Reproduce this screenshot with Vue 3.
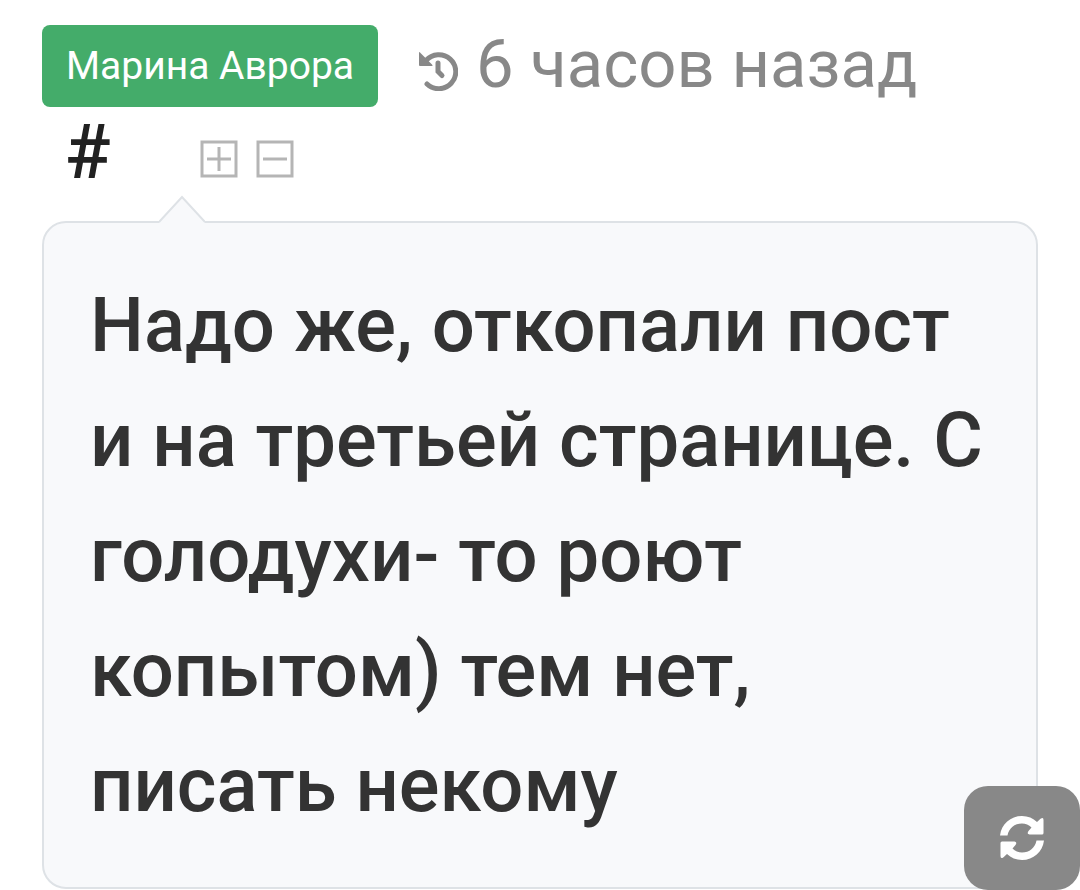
<script setup>
const author = 'Марина Аврора'
const posted = '6 часов назад'
const message = 'Надо же, откопали пост и на третьей странице. С голодухи- то роют копытом) тем нет, писать некому'
</script>

<template>
  <article class="comment">
    <header class="meta">
      <a class="author" href="#author">{{ author }}</a>
      <time class="time">
        <svg class="history" viewBox="0 0 40 40" aria-hidden="true">
          <path d="M8 9.500A17 17 0 1 1 9 33" />
          <path d="M20 12V20.500L24 24.500" />
          <path class="solid" d="M2 1.500Q1 .500 1 2V14Q1 15 2 15H13Q15.500 15 14 13.500Z" />
        </svg>
        <span>{{ posted }}</span>
      </time>
    </header>
    <div class="tools">
      <a class="anchor" href="#comment" aria-label="Ссылка на комментарий">#</a>
      <button class="fold" type="button" aria-label="Развернуть">
        <svg viewBox="0 0 38 38" aria-hidden="true">
          <rect x="2" y="2" width="34" height="34" />
          <path d="M7 19H31M19 7V31" />
        </svg>
      </button>
      <button class="fold" type="button" aria-label="Свернуть">
        <svg viewBox="0 0 38 38" aria-hidden="true">
          <rect x="2" y="2" width="34" height="34" />
          <path d="M7 19H31" />
        </svg>
      </button>
    </div>
    <div class="bubble">
      <svg class="tail" viewBox="0 0 46 28" aria-hidden="true">
        <path d="M0 28L1 26L23 2L45 26L46 28Z" class="tail-fill" />
        <path d="M0 27L23 2L46 27" class="tail-line" />
      </svg>
      <p>{{ message }}</p>
    </div>
  </article>
  <button class="refresh" type="button" aria-label="Обновить">
    <svg viewBox="0 0 44 44" aria-hidden="true">
      <path d="M0 19.500C1.500 8 10.500 0 22 0C28 0 33 2.200 37 6L40.500 2.800Q43.500.500 43.500 4V17Q43.500 18.500 42 18.500H29.500Q26.500 18 28.500 15L31.500 11.500Q27.500 7.500 22 7.500C14.500 7.500 9 12 7.500 19.500Z" />
      <path d="M44 24.500C42.500 36 33.500 44 22 44C16 44 11 41.800 7 38L3.500 41.200Q.500 43.500.500 40V27Q.500 25.500 2 25.500H14.500Q17.500 26 15.500 29L12.500 32.500Q16.500 36.500 22 36.500C29.500 36.500 35 32 36.500 24.500Z" />
    </svg>
  </button>
</template>

<style>
body {
  background: #fff;
}
</style>

<style scoped>
.comment {
  box-sizing: border-box;
  padding: 25px 42px 0;
  font-family: Roboto, "Liberation Sans", sans-serif;
}
.meta {
  display: flex;
  align-items: flex-start;
  gap: 40px;
}
.author {
  padding: 18px 24px;
  border-radius: 8px;
  background: #44ac6a;
  color: #fff;
  font-size: 39px;
  line-height: 46px;
  text-decoration: none;
  white-space: nowrap;
}
.time {
  display: flex;
  align-items: center;
  gap: 18px;
  color: #888;
  font-size: 67px;
  line-height: 78px;
  white-space: nowrap;
}
.history {
  width: 40px;
  height: 40px;
  margin-top: 14px;
  fill: none;
  stroke: currentColor;
  stroke-width: 5;
  stroke-linecap: round;
}
.history .solid {
  fill: currentColor;
  stroke: none;
}
.tools {
  display: flex;
  align-items: center;
  gap: 18px;
  height: 90px;
  padding-left: 23px;
}
.anchor {
  margin-right: 71px;
  color: #212121;
  font-size: 76px;
  font-weight: 500;
  line-height: 90px;
  text-decoration: none;
}
.fold {
  width: 38px;
  height: 38px;
  margin-top: 14px;
  padding: 0;
  border: 0;
  background: none;
}
.fold svg {
  display: block;
  fill: none;
  stroke: #b5b5b5;
  stroke-width: 3;
}
.bubble {
  position: relative;
  margin-top: 24px;
  padding: 45px 46px 44px;
  border: 2px solid #dee2e6;
  border-radius: 24px;
  background: #f8f9fb;
}
.bubble p {
  margin: 0;
  color: #333;
  font-size: 76px;
  font-weight: 500;
  line-height: 115px;
}
.tail {
  position: absolute;
  top: -28px;
  left: 115px;
  width: 46px;
  height: 28px;
}
.tail-fill {
  fill: #f8f9fb;
}
.tail-line {
  fill: none;
  stroke: #dee2e6;
  stroke-width: 2;
}
.refresh {
  position: fixed;
  right: 0;
  bottom: 0;
  display: grid;
  place-items: center;
  width: 116px;
  height: 104px;
  padding: 0;
  border: 0;
  border-radius: 24px;
  background: #888;
}
.refresh svg {
  width: 44px;
  height: 44px;
  fill: #fff;
}
</style>
